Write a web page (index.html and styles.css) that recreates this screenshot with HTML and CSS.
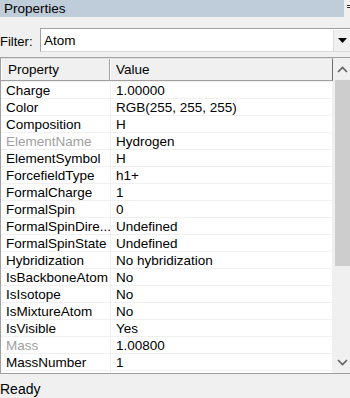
FILE: index.html
```html
<!DOCTYPE html>
<html>
<head>
<meta charset="utf-8">
<link rel="stylesheet" href="styles.css">
</head>
<body>
<div class="panel">
  <div class="titlebar">
    <div class="title">Properties</div>
    <div class="pin"><span></span><span></span></div>
  </div>
  <div class="filter">
    <span class="filter-label">Filter:</span>
    <div class="combo">
      <span class="combo-text">Atom</span>
      <span class="combo-btn"><svg width="9" height="5" viewBox="0 0 9 5"><path d="M0 0H9L4.5 5Z" fill="#000"/></svg></span>
    </div>
  </div>
  <div class="grid">
    <div class="table">
      <div class="head">
        <div class="hc hname">Property</div>
        <div class="hc hval">Value</div>
      </div>
      <div class="row"><div class="c name">Charge</div><div class="c val">1.00000</div></div>
      <div class="row"><div class="c name">Color</div><div class="c val">RGB(255, 255, 255)</div></div>
      <div class="row"><div class="c name">Composition</div><div class="c val">H</div></div>
      <div class="row"><div class="c name dim">ElementName</div><div class="c val">Hydrogen</div></div>
      <div class="row"><div class="c name">ElementSymbol</div><div class="c val">H</div></div>
      <div class="row"><div class="c name">ForcefieldType</div><div class="c val">h1+</div></div>
      <div class="row"><div class="c name">FormalCharge</div><div class="c val">1</div></div>
      <div class="row"><div class="c name">FormalSpin</div><div class="c val">0</div></div>
      <div class="row"><div class="c name">FormalSpinDire...</div><div class="c val">Undefined</div></div>
      <div class="row"><div class="c name">FormalSpinState</div><div class="c val">Undefined</div></div>
      <div class="row"><div class="c name">Hybridization</div><div class="c val">No hybridization</div></div>
      <div class="row"><div class="c name">IsBackboneAtom</div><div class="c val">No</div></div>
      <div class="row"><div class="c name">IsIsotope</div><div class="c val">No</div></div>
      <div class="row"><div class="c name">IsMixtureAtom</div><div class="c val">No</div></div>
      <div class="row"><div class="c name">IsVisible</div><div class="c val">Yes</div></div>
      <div class="row"><div class="c name dim">Mass</div><div class="c val">1.00800</div></div>
      <div class="row"><div class="c name">MassNumber</div><div class="c val">1</div></div>
      <div class="row"><div class="c name"></div><div class="c val"></div></div>
    </div>
    <div class="scroll">
      <div class="arrow"><svg width="11" height="7" viewBox="0 0 11 7"><path d="M1 6L5.5 1.5L10 6" fill="none" stroke="#606060" stroke-width="1.6"/></svg></div>
      <div class="thumb"></div>
      <div class="track"></div>
      <div class="arrow"><svg width="11" height="7" viewBox="0 0 11 7"><path d="M1 1L5.5 5.5L10 1" fill="none" stroke="#606060" stroke-width="1.6"/></svg></div>
    </div>
  </div>
  <div class="status">Ready</div>
</div>
</body>
</html>
```

FILE: styles.css
```css
html, body {
  margin: 0;
  padding: 0;
  background: #f0f0f0;
}
.panel {
  width: 350px;
  height: 398px;
  overflow: hidden;
  display: flex;
  flex-direction: column;
  font-family: "Liberation Sans", Arial, sans-serif;
  font-size: 13px;
  color: #000;
  background: #f0f0f0;
}
.titlebar {
  display: flex;
  height: 17px;
  flex: none;
}
.title {
  width: 344px;
  background: #bfcddb;
  line-height: 17px;
  padding-left: 4px;
  box-sizing: border-box;
  font-size: 13.5px;
}
.pin {
  flex: 1;
  display: flex;
  flex-direction: column;
  gap: 1px;
  padding: 5px 0 0 3px;
}
.pin span {
  display: block;
  width: 3px;
  height: 1px;
  background: #303030;
}
.filter {
  display: flex;
  align-items: center;
  margin-top: 11px;
  height: 24px;
  flex: none;
}
.filter-label {
  width: 40px;
  flex: none;
  padding-top: 2px;
}
.combo {
  flex: 1;
  height: 24px;
  box-sizing: border-box;
  background: #fff;
  border-top: 1px solid #a0a0a0;
  border-left: 1px solid #a0a0a0;
  border-bottom: 1px solid #dadada;
  display: flex;
  align-items: center;
  font-size: 13.5px;
}
.combo-text {
  flex: 1;
  padding-left: 3px;
  padding-top: 1px;
}
.combo-btn {
  width: 16px;
  height: 21px;
  background: #f0f0f0;
  border-left: 1px solid #dadada;
  display: flex;
  align-items: center;
  justify-content: center;
}
.grid {
  margin-top: 5px;
  height: 317px;
  flex: none;
  display: flex;
  box-sizing: border-box;
  border-top: 1px solid #a0a0a0;
  border-bottom: 1px solid #a0a0a0;
  border-left: 1px solid #a0a0a0;
  overflow: hidden;
}
.table {
  width: 332px;
  flex: none;
  background: #fff;
  overflow: hidden;
  font-size: 13.5px;
}
.head {
  display: flex;
  height: 23px;
  box-sizing: border-box;
  background: #f0f0f0;
  border-top: 1px solid #e3e3e3;
  border-bottom: 1px solid #a0a0a0;
  border-right: 1px solid #6d6d6d;
}
.hc {
  line-height: 21px;
  box-sizing: border-box;
  border-left: 1px solid #ffffff;
}
.hname {
  width: 109px;
  padding-left: 6px;
  border-right: 1px solid #a0a0a0;
}
.hval {
  flex: 1;
  padding-left: 5px;
}
.row {
  display: flex;
  height: 17px;
  box-sizing: border-box;
  border-top: 1px solid #f0f0f0;
  border-right: 1px solid #f0f0f0;
}
.c {
  line-height: 17px;
  white-space: nowrap;
  overflow: hidden;
}
.name {
  width: 110px;
  padding-left: 5px;
  box-sizing: border-box;
  border-right: 1px solid #f0f0f0;
}
.val {
  flex: 1;
  padding-left: 5px;
}
.dim {
  color: #a0a0a0;
}
.scroll {
  flex: 1;
  display: flex;
  flex-direction: column;
  background: #f0f0f0;
  padding-left: 2px;
}
.arrow {
  height: 22px;
  display: flex;
  align-items: center;
  justify-content: center;
  flex: none;
}
.thumb {
  height: 186px;
  background: #cdcdcd;
  flex: none;
}
.track {
  flex: 1;
}
.status {
  flex: 1;
  font-size: 14px;
  line-height: 24px;
  padding-top: 3px;
}
```
